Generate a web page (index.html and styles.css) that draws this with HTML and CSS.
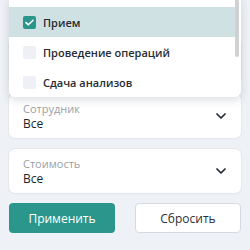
FILE: index.html
```html
<!DOCTYPE html>
<html lang="ru">
<head>
    <meta charset="UTF-8">
    <meta name="viewport" content="width=device-width, initial-scale=1.0">
    <title>Фильтры</title>
    <link rel="stylesheet" href="styles.css">
</head>
<body>
    <div class="filters">
        <div class="field field-open">
            <div class="dropdown">
                <div class="option option-active">
                    <span class="check check-on">
                        <svg width="9" height="7" viewBox="0 0 9 7"><path d="M1 3.6 L3.4 5.8 L8 1.2" fill="none" stroke="#fff" stroke-width="1.6" stroke-linecap="round" stroke-linejoin="round"/></svg>
                    </span>
                    Прием
                </div>
                <div class="option">
                    <span class="check"></span>
                    Проведение операций
                </div>
                <div class="option">
                    <span class="check"></span>
                    Сдача анализов
                </div>
                <div class="scrollbar"></div>
            </div>
        </div>

        <div class="field">
            <div class="field-text">
                <span class="field-label">Сотрудник</span>
                <span class="field-value">Все</span>
            </div>
            <svg class="chevron" width="10" height="6" viewBox="0 0 10 6"><path d="M1 1 L5 5 L9 1" fill="none" stroke="#1f2a33" stroke-width="1.7" stroke-linecap="round" stroke-linejoin="round"/></svg>
        </div>

        <div class="field">
            <div class="field-text">
                <span class="field-label">Стоимость</span>
                <span class="field-value">Все</span>
            </div>
            <svg class="chevron" width="10" height="6" viewBox="0 0 10 6"><path d="M1 1 L5 5 L9 1" fill="none" stroke="#1f2a33" stroke-width="1.7" stroke-linecap="round" stroke-linejoin="round"/></svg>
        </div>

        <div class="buttons">
            <button class="btn btn-apply">Применить</button>
            <button class="btn btn-reset">Сбросить</button>
        </div>
    </div>
</body>
</html>
```
FILE: styles.css
```css
body {
    font-family: "Open Sans", "Noto Sans", sans-serif;
    background-color: #eef1f6;
    margin: 0;
    overflow: hidden;
}

.filters {
    display: flex;
    flex-direction: column;
    gap: 11px;
    padding: 39px 9px 0;
}

.field {
    position: relative;
    height: 44px;
    box-sizing: border-box;
    padding: 0 14px;
    display: flex;
    align-items: center;
    justify-content: space-between;
    background-color: #fff;
    border-radius: 6px;
    box-shadow: 0 0 0 1px #e4e8ee, 0 1px 2px rgba(0, 0, 0, 0.05);
}

.field-text {
    display: flex;
    flex-direction: column;
}

.field-label {
    font-size: 11px;
    line-height: 14px;
    color: #9a9ea4;
}

.field-value {
    font-size: 12px;
    line-height: 15px;
    color: #1d2329;
}

.chevron {
    margin-right: 1px;
}

.dropdown {
    position: absolute;
    top: -44px;
    left: 0;
    right: 0;
    z-index: 2;
    padding: 12px 0 0;
    height: 102px;
    box-sizing: border-box;
    background-color: #fff;
    border-radius: 6px;
    box-shadow: 0 3px 8px rgba(40, 50, 60, 0.16);
}

.option {
    height: 30px;
    margin-right: 6px;
    padding-left: 14px;
    display: flex;
    align-items: center;
    gap: 7px;
    font-size: 11px;
    font-weight: 600;
    color: #262c31;
}

.option-active {
    background-color: #d0e1e4;
}

.check {
    width: 13px;
    height: 13px;
    border-radius: 2px;
    background-color: #eef0f6;
    display: flex;
    align-items: center;
    justify-content: center;
}

.check-on {
    background-color: #2a958b;
}

.scrollbar {
    position: absolute;
    top: 0;
    right: 2px;
    width: 4px;
    height: 62px;
    border-radius: 2px;
    background-color: #cfd1d3;
}

.buttons {
    display: flex;
    justify-content: space-between;
    margin-top: -1px;
}

.btn {
    width: 106px;
    height: 30px;
    border-radius: 4px;
    font-family: "Open Sans", "Noto Sans", sans-serif;
    font-size: 12px;
    cursor: pointer;
}

.btn-apply {
    background-color: #2b978c;
    border: none;
    color: #fff;
}

.btn-reset {
    background-color: #fff;
    border: 1px solid #d6dae0;
    color: #2a3035;
}
```
